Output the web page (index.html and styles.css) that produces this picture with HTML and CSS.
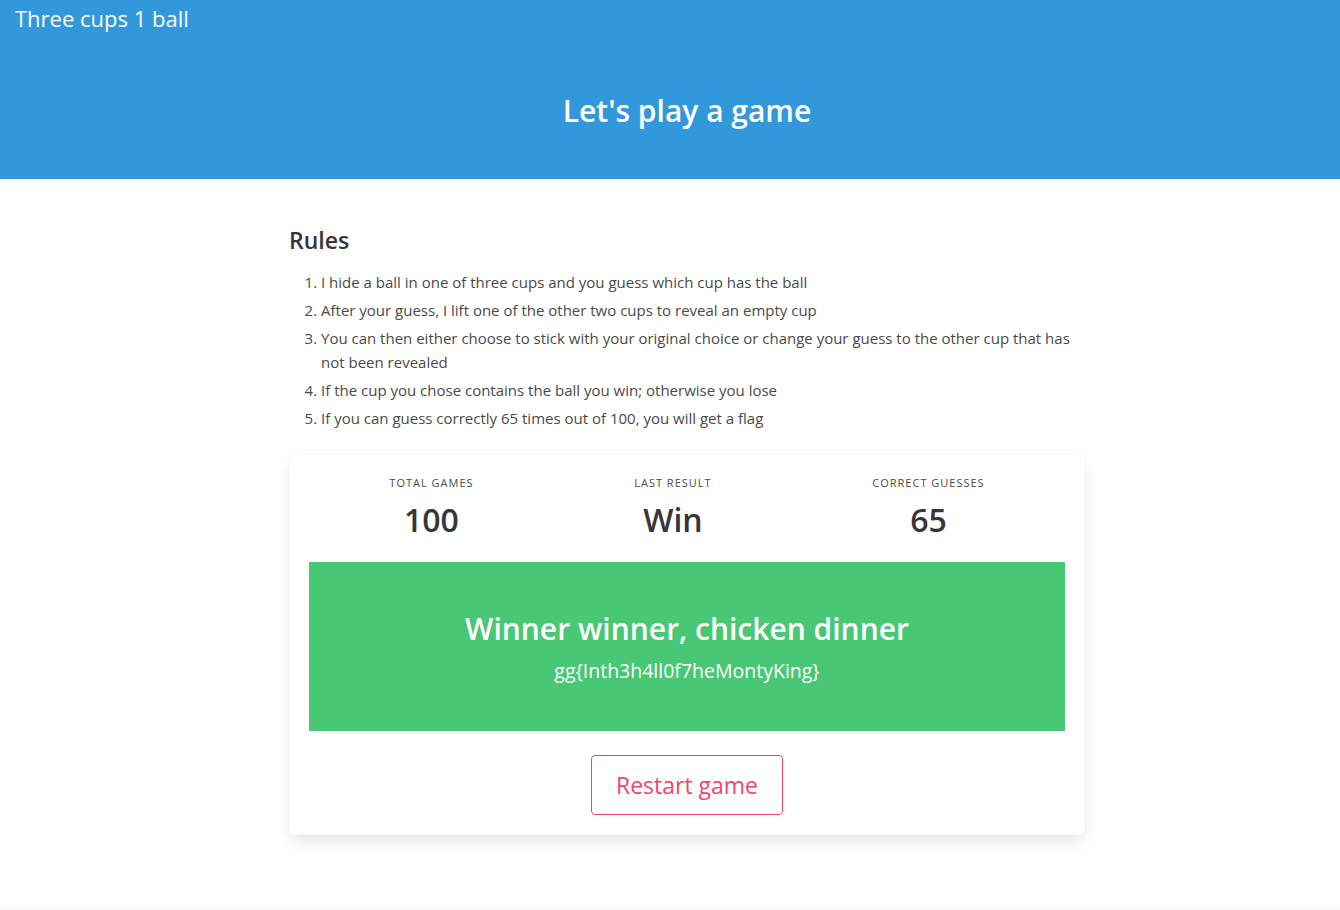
FILE: index.html
```html
<!DOCTYPE html>
<html lang="en">
<head>
<meta charset="utf-8">
<title>Three cups 1 ball</title>
<link rel="stylesheet" href="styles.css">
</head>
<body>
<header class="hero">
  <div class="hero-head">Three cups 1 ball</div>
  <div class="hero-body">
    <h1 class="hero-title">Let's play a game</h1>
  </div>
</header>
<section class="section">
  <div class="container">
    <div class="content">
      <h3>Rules</h3>
      <ol>
        <li>I hide a ball in one of three cups and you guess which cup has the ball</li>
        <li>After your guess, I lift one of the other two cups to reveal an empty cup</li>
        <li>You can then either choose to stick with your original choice or change your guess to the other cup that has not been revealed</li>
        <li>If the cup you chose contains the ball you win; otherwise you lose</li>
        <li>If you can guess correctly 65 times out of 100, you will get a flag</li>
      </ol>
    </div>
    <div class="box">
      <div class="level">
        <div class="level-item">
          <p class="heading">Total games</p>
          <p class="stat">100</p>
        </div>
        <div class="level-item">
          <p class="heading">Last result</p>
          <p class="stat">Win</p>
        </div>
        <div class="level-item">
          <p class="heading">Correct guesses</p>
          <p class="stat">65</p>
        </div>
      </div>
      <div class="winner">
        <p class="winner-title">Winner winner, chicken dinner</p>
        <p class="winner-flag">gg{Inth3h4ll0f7heMontyKing}</p>
      </div>
      <div class="actions">
        <button class="button-restart" type="button">Restart game</button>
      </div>
    </div>
  </div>
</section>
<footer class="footer"></footer>
</body>
</html>
```

FILE: styles.css
```css
* { box-sizing: border-box; }
html, body { margin: 0; padding: 0; }
body {
  font-family: "Open Sans", "Noto Sans", sans-serif;
  font-size: 16px;
  line-height: 1.5;
  color: #4a4a4a;
  background: #fff;
}
p, h1, h3, ol { margin: 0; }

.hero {
  background: #3298dc;
  color: #fff;
  height: 179px;
}
.hero-head {
  font-size: 22px;
  line-height: 36px;
  padding-left: 15px;
}
.hero-body {
  padding: 57px 0 0 34px;
  text-align: center;
}
.hero-title {
  font-size: 30px;
  font-weight: 600;
  line-height: 36px;
}

.section {
  padding: 48px 0 0 34px;
  height: 728px;
}
.container {
  width: 796px;
  margin: 0 auto;
}
.content h3 {
  font-size: 23px;
  font-weight: 600;
  line-height: 27px;
  color: #363636;
  margin-bottom: 16px;
}
.content ol {
  margin: 0 0 25px 0;
  padding-left: 32px;
  font-size: 15px;
  line-height: 24px;
}
.content li + li { margin-top: 4px; }

.box {
  background: #fff;
  border-radius: 6px;
  padding: 20px;
  box-shadow: 0 8px 16px -2px rgba(10,10,10,.1), 0 0 0 1px rgba(10,10,10,.02);
}
.level {
  display: flex;
  margin-bottom: 20px;
}
.level-item {
  flex: 1 1 auto;
  text-align: center;
}
.heading {
  font-size: 11px;
  letter-spacing: 1px;
  text-transform: uppercase;
  line-height: 16px;
  margin-bottom: 6px;
}
.stat {
  font-size: 32px;
  font-weight: 600;
  line-height: 45px;
  color: #363636;
}
.winner {
  background: #48c774;
  color: #fff;
  text-align: center;
  padding: 49px 24px 48px;
}
.winner-title {
  font-size: 30px;
  font-weight: 600;
  line-height: 36px;
}
.winner-flag {
  font-size: 19.5px;
  line-height: 25px;
  margin-top: 11px;
}
.actions {
  margin-top: 24px;
  text-align: center;
}
.button-restart {
  font-family: inherit;
  font-size: 23px;
  line-height: 36px;
  height: 60px;
  padding: 11px 24px;
  border: 1px solid #f14668;
  border-radius: 4px;
  color: #f14668;
  background: #fff;
  cursor: pointer;
}
.footer {
  background: #fafafa;
  height: 100px;
}
```
